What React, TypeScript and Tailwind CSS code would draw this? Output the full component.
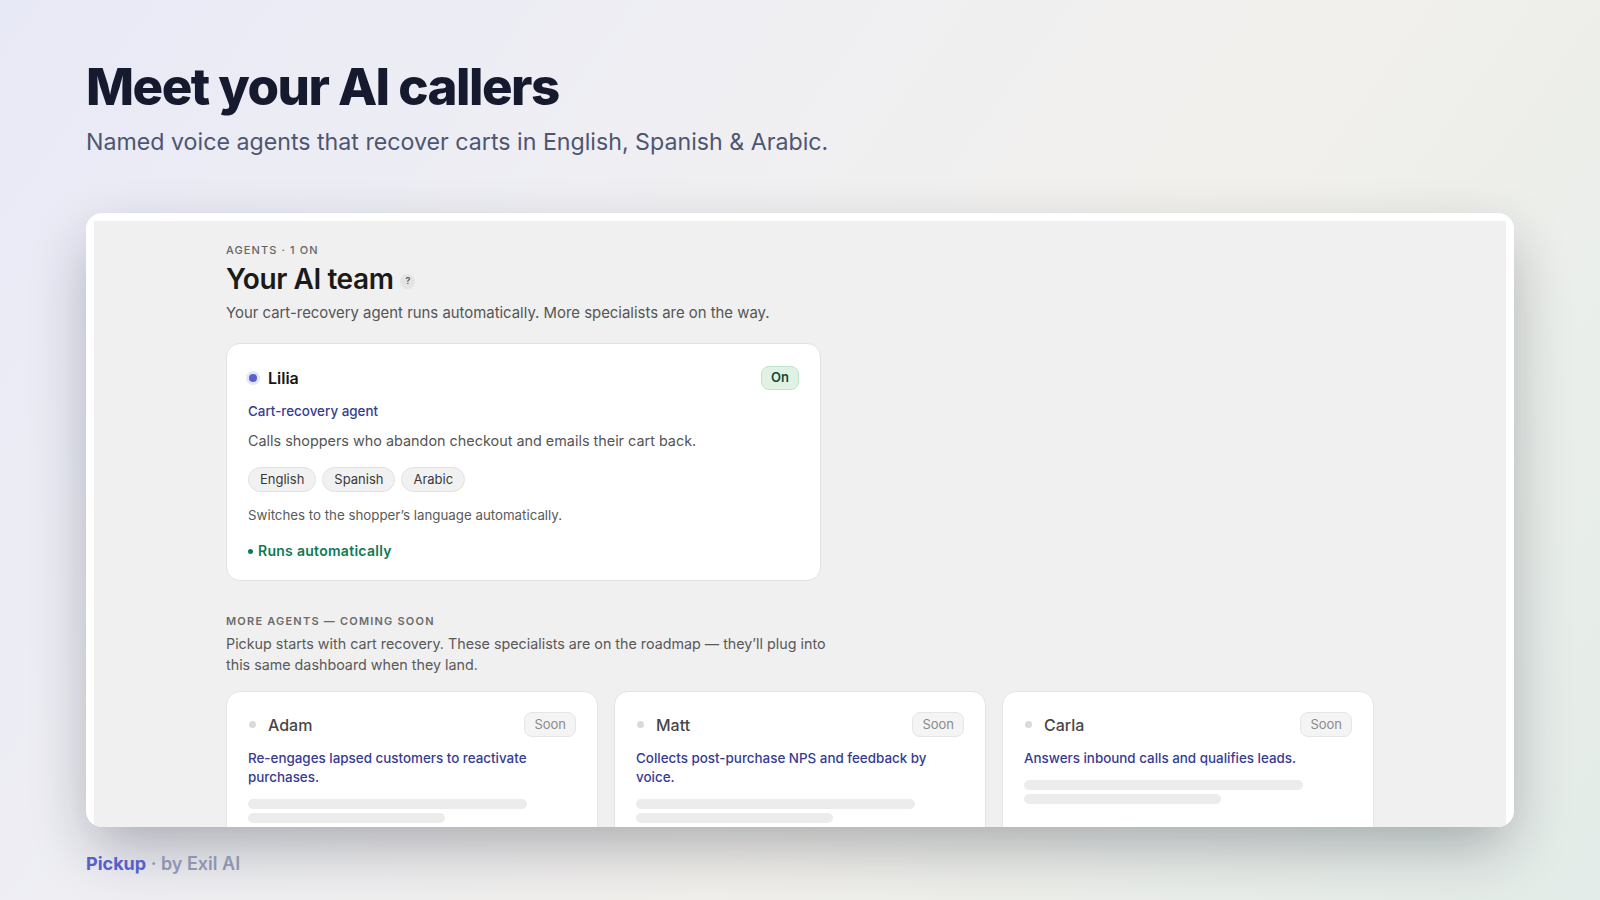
import React from "react";

const soon = [
  { name: "Adam", desc: "Re-engages lapsed customers to reactivate purchases." },
  { name: "Matt", desc: "Collects post-purchase NPS and feedback by voice." },
  { name: "Carla", desc: "Answers inbound calls and qualifies leads." },
];

function SoonCard({ name, desc }: { name: string; desc: string }) {
  return (
    <div className="rounded-[14px] border border-[#e4e4e4] bg-white px-[21px] pt-[20px] pb-6">
      <div className="flex h-[25px] items-center justify-between">
        <div className="flex items-center gap-[12px]">
          <span className="ml-[1px] h-[7px] w-[7px] rounded-full bg-[#d9d9df]" />
          <span className="text-[16px] font-medium text-[#474747]">{name}</span>
        </div>
        <span className="flex h-[25px] items-center rounded-[8px] border border-[#e6e6e6] bg-[#f4f4f4] px-[9px] text-[13px] text-[#8b8b8b]">
          Soon
        </span>
      </div>
      <p className="mt-3 text-[13.4px] font-medium leading-[19px] text-[#363c93]">{desc}</p>
      <div className="mt-3 flex flex-col gap-[4px]">
        <div className="h-[10px] w-[85%] rounded-full bg-[#ececec]" />
        <div className="h-[10px] w-[60%] rounded-full bg-[#ececec]" />
      </div>
    </div>
  );
}

export default function App() {
  return (
    <div
      className="relative h-[900px] w-full overflow-hidden bg-[linear-gradient(125deg,#e8e9f6_0%,#efeff3_35%,#f2f0ec_60%,#e3ece8_100%)] px-[86px] pt-[61px]"
      style={{ fontFamily: "Inter, 'Noto Sans', sans-serif" }}
    >
      <h1 className="text-[51px] font-extrabold leading-none tracking-[-0.03em] text-[#161a2e]">
        Meet your AI callers
      </h1>
      <p className="mt-[15px] text-[23.2px] leading-[31px] text-[#4d5670]">
        Named voice agents that recover carts in English, Spanish &amp; Arabic.
      </p>

      <div className="mt-[55px] h-[614px] overflow-hidden rounded-[16px] bg-white px-2 pt-2 shadow-[0_24px_60px_-6px_rgba(20,24,40,0.32)]">
        <div className="h-full bg-[#f0f0f0] pt-[21px]">
          <div className="mx-auto w-[1148px]">
            <div className="text-[11px] font-medium uppercase leading-4 tracking-[0.1em] text-[#666]">
              Agents · 1 on
            </div>
            <div className="mt-[3px] flex items-center gap-[7px]">
              <h2 className="text-[28px] font-semibold leading-9 tracking-[-0.015em] text-[#1a1a1a]">Your AI team</h2>
              <span className="mt-[4px] flex h-[15px] w-[15px] items-center justify-center rounded-full bg-[#e4e4e4] text-[9px] font-semibold text-[#555]">
                ?
              </span>
            </div>
            <p className="mt-1.5 text-[14.9px] leading-5 text-[#555]">
              Your cart-recovery agent runs automatically. More specialists are on the way.
            </p>

            <div className="mt-[20px] w-[595px] rounded-[14px] border border-[#e2e2e2] bg-white px-[21px] pt-[22px] pb-[19px]">
              <div className="flex h-6 items-center justify-between">
                <div className="flex items-center gap-[11px]">
                  <span className="ml-[1px] h-[8px] w-[8px] rounded-full bg-[#5a61cf] shadow-[0_0_0_3px_rgba(90,97,207,0.16)]" />
                  <span className="text-[16px] font-semibold text-[#151515]">Lilia</span>
                </div>
                <span className="flex h-6 items-center rounded-[8px] border border-[#c3e4cc] bg-[#dff2e4] px-[9px] text-[13px] font-semibold text-[#124a38]">
                  On
                </span>
              </div>
              <div className="mt-[12px] text-[13.4px] font-medium leading-[18px] text-[#363c93]">Cart-recovery agent</div>
              <p className="mt-[11px] text-[14.4px] leading-5 text-[#555]">
                Calls shoppers who abandon checkout and emails their cart back.
              </p>
              <div className="mt-[16px] flex gap-[6px]">
                {["English", "Spanish", "Arabic"].map((l) => (
                  <span
                    key={l}
                    className="flex h-[25px] items-center rounded-full border border-[#e2e2e2] bg-[#f1f1f1] px-[11px] text-[13px] text-[#3a3a3a]"
                  >
                    {l}
                  </span>
                ))}
              </div>
              <p className="mt-[14px] text-[13.3px] leading-[18px] text-[#5a5a5a]">
                Switches to the shopper’s language automatically.
              </p>
              <div className="mt-[17px] flex items-center gap-[5px] text-[14px] font-semibold leading-5 tracking-[0.02em] text-[#0f7a55]">
                <span className="h-[5px] w-[5px] rounded-full bg-[#0f7a55]" />
                Runs automatically
              </div>
            </div>

            <div className="mt-8 text-[11px] font-semibold uppercase leading-4 tracking-[0.11em] text-[#6b6b6b]">
              More agents — coming soon
            </div>
            <p className="mt-[4px] max-w-[610px] text-[14.3px] leading-[21px] text-[#595959]">
              Pickup starts with cart recovery. These specialists are on the roadmap — they’ll plug into this same dashboard when they land.
            </p>

            <div className="mt-[16px] grid grid-cols-3 gap-4">
              {soon.map((s) => (
                <SoonCard key={s.name} {...s} />
              ))}
            </div>
          </div>
        </div>
      </div>

      <div className="mt-[23px] text-[18px] leading-[27px]">
        <span className="font-bold text-[#5560c9]">Pickup</span>
        <span className="font-semibold text-[#8e95b2]"> · by Exil AI</span>
      </div>
    </div>
  );
}
